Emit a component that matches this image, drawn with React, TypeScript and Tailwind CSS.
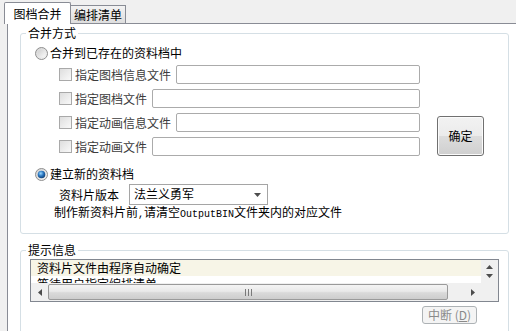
import React from 'react';

const cjk = "font-['Noto_Sans_CJK_SC',sans-serif]";

const Radio: React.FC<{ checked?: boolean; id: string }> = ({ checked, id }) => (
  <svg width="13" height="13" viewBox="0 0 13 13" className="shrink-0">
    <defs>
      <linearGradient id={`${id}o`} x1="0" y1="0" x2="1" y2="1">
        <stop offset="0" stopColor="#d2d2d2" />
        <stop offset="1" stopColor="#f6f6f6" />
      </linearGradient>
      <linearGradient id={`${id}i`} x1="0" y1="0" x2="1" y2="1">
        <stop offset="0" stopColor="#cfcfcf" />
        <stop offset="1" stopColor="#fafafa" />
      </linearGradient>
      <radialGradient id={`${id}c`} cx="0.4" cy="0.35" r="0.7">
        <stop offset="0" stopColor="#9ad8ff" />
        <stop offset="0.5" stopColor="#2a76c0" />
        <stop offset="1" stopColor="#0e3a6c" />
      </radialGradient>
    </defs>
    <circle cx="6.5" cy="6.5" r="6" fill={`url(#${id}o)`} stroke="#8f8f8f" />
    <circle cx="6.5" cy="6.5" r="3.8" fill={checked ? `url(#${id}c)` : `url(#${id}i)`} />
  </svg>
);

const CheckRow: React.FC<{ label: string }> = ({ label }) => (
  <div className="flex items-center h-[19px]">
    <div className="w-[13px] h-[13px] shrink-0 border border-[#a9a9a9] bg-gradient-to-br from-[#dedede] to-[#f9f9f9]"></div>
    <span className="ml-[3px] leading-[14px] text-[#3c3c3c] whitespace-nowrap">{label}</span>
    <div className="ml-[5px] flex-1 h-[19px] border border-[#ababab] rounded-[2px] bg-white"></div>
  </div>
);

const Tri: React.FC<{ dir: 'up' | 'down' | 'left' | 'right' }> = ({ dir }) => {
  const pts = {
    up: '0,4 3.5,0 7,4',
    down: '0,0 7,0 3.5,4',
    left: '4,0 4,7 0,3.5',
    right: '0,0 0,7 4,3.5',
  }[dir];
  const horiz = dir === 'left' || dir === 'right';
  return (
    <svg width={horiz ? 4 : 7} height={horiz ? 7 : 4} viewBox={horiz ? '0 0 4 7' : '0 0 7 4'}>
      <polygon points={pts} fill="#4d4d4d" />
    </svg>
  );
};

export default function App() {
  return (
    <div className={`w-[516px] h-[331px] overflow-hidden bg-[#f0f0f0] flex flex-col text-[12px] text-black ${cjk}`}>
      {/* Tabs */}
      <div className="h-[23px] shrink-0 flex items-end pl-[4px]">
        <div className="relative z-10 -mb-px h-[22px] w-[67px] bg-white border border-b-0 border-[#898c95] rounded-t-[2px] flex items-center justify-center leading-[14px]">
          图档合并
        </div>
        <div className="h-[18px] w-[55px] border-t border-r border-[#898c95] bg-gradient-to-b from-[#f3f3f3] to-[#dedede] flex items-center justify-center leading-[14px]">
          编排清单
        </div>
      </div>

      {/* Tab page */}
      <div className="flex-1 ml-[7px] bg-white border-l border-t border-[#898c95] pl-[12px]">
        {/* 合并方式 */}
        <fieldset className="mt-[2px] w-[489px] border border-[#d5dfe5] rounded-[3px] pb-[14px]">
          <legend className="ml-[5px] px-[2px] leading-[14px]">合并方式</legend>

          <div className="flex items-center h-[20px] mt-[3px] pl-[14px]">
            <Radio id="r1" />
            <span className="ml-[2px] leading-[14px]">合并到已存在的资料档中</span>
          </div>

          <div className="flex mt-[2px] pl-[38px]">
            <div className="w-[361px] flex flex-col gap-[5px]">
              <CheckRow label="指定图档信息文件" />
              <CheckRow label="指定图档文件" />
              <CheckRow label="指定动画信息文件" />
              <CheckRow label="指定动画文件" />
            </div>
            <button className="ml-[17px] mt-[51px] w-[47px] h-[40px] border border-[#707070] rounded-[3px] bg-[linear-gradient(to_bottom,#f2f2f2_0%,#ebebeb_50%,#dddddd_50%,#cfcfcf_100%)] shadow-[inset_0_0_0_1px_#fbfbfb] flex items-center justify-center leading-[14px]">
              确定
            </button>
          </div>

          <div className="flex items-center h-[16px] mt-[10px] pl-[14px]">
            <Radio id="r2" checked />
            <span className="ml-[2px] leading-[14px]">建立新的资料档</span>
          </div>

          <div className="flex items-center h-[21px] mt-[2px] pl-[38px]">
            <span className="leading-[14px]">资料片版本</span>
            <div className="ml-[10px] w-[139px] h-[21px] border border-[#a5a5a5] bg-white flex items-center pl-[4px] pr-[6px]">
              <span className="flex-1 leading-[14px] -mt-[2px]">法兰义勇军</span>
              <Tri dir="down" />
            </div>
          </div>

          <div className="h-[14px] pl-[33px] leading-[14px] whitespace-nowrap">
            制作新资料片前<span className="font-['Liberation_Mono',monospace] text-[10px]">,</span>请清空
            <span className="font-['Liberation_Mono',monospace] text-[10px]">OutputBIN</span>文件夹内的对应文件
          </div>
        </fieldset>

        {/* 提示信息 */}
        <fieldset className="mt-[9px] w-[489px] border border-[#d5dfe5] rounded-[3px] pb-[20px]">
          <legend className="ml-[5px] px-[2px] leading-[14px]">提示信息</legend>

          <div className="mt-[2px] ml-[9px] w-[469px] h-[43px] border border-[#828790] bg-white flex flex-col">
            <div className="flex h-[23px]">
              <div className="flex-1 overflow-hidden">
                <div className="h-[16px] bg-[#f7f5e7] pl-[6px] leading-[16px] whitespace-nowrap">资料片文件由程序自动确定</div>
                <div className="h-[16px] pl-[6px] leading-[16px] whitespace-nowrap">等待用户指定编排清单</div>
              </div>
              <div className="w-[17px] bg-[#f0f0f0] flex flex-col items-center justify-center gap-[5px]">
                <Tri dir="up" />
                <Tri dir="down" />
              </div>
            </div>
            <div className="flex h-[18px] bg-[#f0f0f0]">
              <div className="w-[17px] flex items-center justify-center">
                <Tri dir="left" />
              </div>
              <div className="w-[400px] my-[1px] border border-[#9a9a9a] rounded-[2px] bg-[linear-gradient(to_bottom,#f4f4f4_0%,#e9e9e9_45%,#dadada_55%,#cdcdcd_100%)] flex items-center justify-center gap-[2px]">
                <div className="w-px h-[7px] bg-[#7a7a7a]"></div>
                <div className="w-px h-[7px] bg-[#7a7a7a]"></div>
                <div className="w-px h-[7px] bg-[#7a7a7a]"></div>
              </div>
              <div className="flex-1"></div>
              <div className="w-[17px] flex items-center justify-center">
                <Tri dir="right" />
              </div>
              <div className="w-[17px] bg-[#f0f0f0]"></div>
            </div>
          </div>

          <div className="flex justify-end mt-[4px] pr-[31px]">
            <button className="w-[55px] h-[18px] border border-[#adb2b5] rounded-[3px] bg-[#f4f4f4] text-[#8a8a8a] flex items-center justify-center leading-[14px]">
              中断 (<span className="underline">D</span>)
            </button>
          </div>
        </fieldset>
      </div>
    </div>
  );
}
